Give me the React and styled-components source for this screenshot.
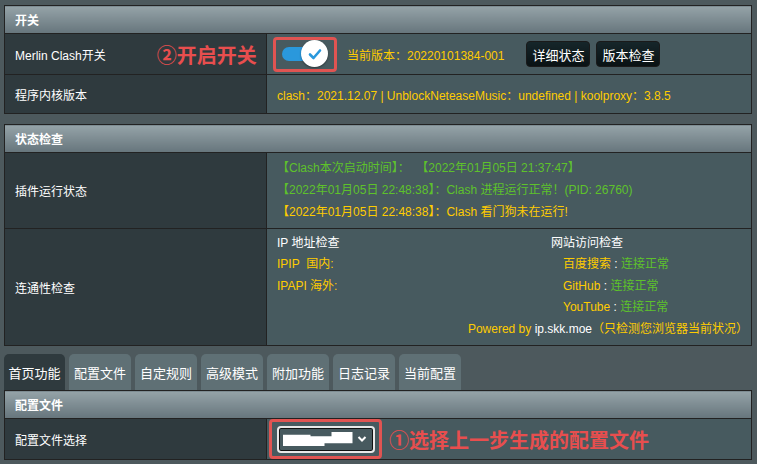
import React from "react"
import styled, { createGlobalStyle } from "styled-components"

const GlobalStyle = createGlobalStyle`
    html, body {
        margin: 0;
        padding: 0;
        background: #4d595d;
        font-family: "Liberation Sans", Arial, "Noto Sans CJK SC", sans-serif;
        font-size: 12px;
        color: #fff;
    }
`

const tabs = ["首页功能", "配置文件", "自定规则", "高级模式", "附加功能", "日志记录", "当前配置"]

const Page = styled.div`
    padding: 5px 5px 0 4px;
    width: 748px;
`

const Table = styled.table`
    width: 748px;
    border-collapse: collapse;
    border: 1px solid #222;
    margin-bottom: ${p => p.gap || 0}px;
    table-layout: fixed;
`

const LabelCol = styled.col`
    width: 262px;
`

const Head = styled.th`
    height: 27px;
    padding: 0 0 0 10px;
    text-align: left;
    font-weight: bold;
    font-size: 12px;
    color: #fff;
    background: linear-gradient(#95a3a8 0%, #66757c 100%);
    border: 1px solid #222;
`

const Label = styled.th`
    height: ${p => p.h}px;
    padding: 0 0 0 10px;
    text-align: left;
    font-weight: normal;
    background: #2f3a3e;
    border: 1px solid #222;
    white-space: nowrap;
`

const LabelInner = styled.div`
    display: flex;
    align-items: center;
`

const Cell = styled.td`
    padding: 0 10px;
    background: #475a5f;
    border: 1px solid #222;
    vertical-align: middle;
    white-space: nowrap;
`

const Note = styled.span`
    color: #e84e4e;
    font-size: 20px;
    font-weight: bold;
    margin-left: ${p => p.ml || 0}px;
`

const Flex = styled.div`
    display: flex;
    align-items: center;
`

const RedBox = styled.div`
    display: flex;
    align-items: center;
    justify-content: center;
    border: 3px solid #e05452;
    border-radius: 4px;
    box-sizing: border-box;
    width: ${p => p.w}px;
    height: ${p => p.h}px;
    margin-left: ${p => p.ml}px;
    flex-shrink: 0;
`

const Track = styled.div`
    position: relative;
    width: 46px;
    height: 28px;
    display: flex;
    align-items: center;
    &::before {
        content: "";
        width: 32px;
        height: 14px;
        border-radius: 7px;
        background: #2a98dc;
    }
`

const Knob = styled.div`
    position: absolute;
    right: 0;
    top: 0;
    width: 27px;
    height: 27px;
    border-radius: 50%;
    background: #fff;
    box-shadow: 0 1px 2px rgba(0,0,0,0.4);
    display: flex;
    align-items: center;
    justify-content: center;
`

const Yellow = styled.span`
    color: #fc0;
`

const Green = styled.span`
    color: #5ec22b;
`

const White = styled.span`
    color: #fff;
`

const Button = styled.button`
    height: 26px;
    width: 64px;
    margin-left: ${p => p.ml || 0}px;
    padding: 0;
    font-family: inherit;
    font-size: 13px;
    color: #fff;
    background: linear-gradient(#16262a 0%, #0a1214 100%);
    border: 1px solid #1a1a1a;
    border-radius: 4px;
    flex-shrink: 0;
`

const Lines = styled.div`
    display: flex;
    flex-direction: column;
    gap: 5px;
    line-height: 17px;
`

const Conn = styled.div`
    display: grid;
    grid-template-columns: 274px 1fr;
    line-height: 21.5px;
    padding: 3px 0 4px;
`

const Indent = styled.div`
    padding-left: 12px;
`

const Powered = styled.div`
    grid-column: 1 / 3;
    text-align: right;
    margin-right: -7px;
`

const TabBar = styled.div`
    display: flex;
    gap: 4px;
    margin-top: 8px;
    height: 36px;
`

const Tab = styled.div`
    width: ${p => p.active ? 61 : 62}px;
    display: flex;
    align-items: center;
    justify-content: center;
    font-size: 13px;
    color: #fff;
    border-radius: 5px 5px 0 0;
    background: ${p => p.active ? "#2f3a3e" : "#5f7075"};
`

const Select = styled.div`
    width: 98px;
    height: 27px;
    box-sizing: border-box;
    border: 2px solid #e8e8e8;
    border-radius: 4px;
    box-shadow: inset 0 0 0 1px #111;
    background: #475a5f;
    display: flex;
    align-items: center;
    padding: 0 6px 0 4px;
    gap: 4px;
`

const Blur = styled.div`
    flex: 1;
    height: 14px;
    background: #fff;
    clip-path: polygon(0 20%, 40% 20%, 40% 30%, 70% 30%, 70% 0, 100% 0, 100% 80%, 60% 80%, 60% 100%, 0 100%);
`

const Cols = () => (
    <colgroup>
        <LabelCol />
        <col />
    </colgroup>
)

const App = () => {
    return (
        <Page>
            <GlobalStyle />
            <Table gap={10}>
                <Cols />
                <tbody>
                    <tr><Head colSpan={2}>开关</Head></tr>
                    <tr>
                        <Label h={40}>
                            <LabelInner>
                                Merlin Clash开关
                                <Note ml={51}>②开启开关</Note>
                            </LabelInner>
                        </Label>
                        <Cell>
                            <Flex>
                                <RedBox w={64} h={35} ml={-4}>
                                    <Track>
                                        <Knob>
                                            <svg width="16" height="16" viewBox="0 0 16 16">
                                                <polyline points="3,8.5 6.5,12 13,4.5" fill="none" stroke="#2a98dc" strokeWidth="2.6" strokeLinecap="round" strokeLinejoin="round" />
                                            </svg>
                                        </Knob>
                                    </Track>
                                </RedBox>
                                <Yellow style={{ marginLeft: 10 }}>当前版本：20220101384-001</Yellow>
                                <Button ml={22}>详细状态</Button>
                                <Button ml={6}>版本检查</Button>
                            </Flex>
                        </Cell>
                    </tr>
                    <tr>
                        <Label h={38}>程序内核版本</Label>
                        <Cell>
                            <Yellow>clash：2021.12.07 | UnblockNeteaseMusic：undefined | koolproxy：3.8.5</Yellow>
                        </Cell>
                    </tr>
                </tbody>
            </Table>

            <Table>
                <Cols />
                <tbody>
                    <tr><Head colSpan={2}>状态检查</Head></tr>
                    <tr>
                        <Label h={75}>插件运行状态</Label>
                        <Cell>
                            <Lines>
                                <Green>【Clash本次启动时间】：&nbsp;&nbsp;【2022年01月05日 21:37:47】</Green>
                                <Green>【2022年01月05日 22:48:38】：Clash 进程运行正常！(PID: 26760)</Green>
                                <Yellow>【2022年01月05日 22:48:38】：Clash 看门狗未在运行!</Yellow>
                            </Lines>
                        </Cell>
                    </tr>
                    <tr>
                        <Label h={116}>连通性检查</Label>
                        <Cell>
                            <Conn>
                                <White>IP 地址检查</White>
                                <White>网站访问检查</White>
                                <Yellow>IPIP&nbsp; 国内:</Yellow>
                                <Indent><Yellow>百度搜索</Yellow> : <Green>连接正常</Green></Indent>
                                <Yellow>IPAPI 海外:</Yellow>
                                <Indent><Yellow>GitHub</Yellow> : <Green>连接正常</Green></Indent>
                                <span />
                                <Indent><Yellow>YouTube</Yellow> : <Green>连接正常</Green></Indent>
                                <Powered>
                                    <Yellow>Powered by </Yellow><White>ip.skk.moe</White><Yellow>（只检测您浏览器当前状况）</Yellow>
                                </Powered>
                            </Conn>
                        </Cell>
                    </tr>
                </tbody>
            </Table>

            <TabBar>
                {tabs.map((t, i) => <Tab key={t} active={i === 0}>{t}</Tab>)}
            </TabBar>

            <Table>
                <Cols />
                <tbody>
                    <tr><Head colSpan={2}>配置文件</Head></tr>
                    <tr>
                        <Label h={40}>配置文件选择</Label>
                        <Cell>
                            <Flex>
                                <RedBox w={113} h={40} ml={-8}>
                                    <Select>
                                        <Blur />
                                        <svg width="10" height="8" viewBox="0 0 10 8">
                                            <polyline points="1.5,2 5,5.5 8.5,2" fill="none" stroke="#fff" strokeWidth="2" />
                                        </svg>
                                    </Select>
                                </RedBox>
                                <Note ml={7}>①选择上一步生成的配置文件</Note>
                            </Flex>
                        </Cell>
                    </tr>
                </tbody>
            </Table>
        </Page>
    )
}

export default App
